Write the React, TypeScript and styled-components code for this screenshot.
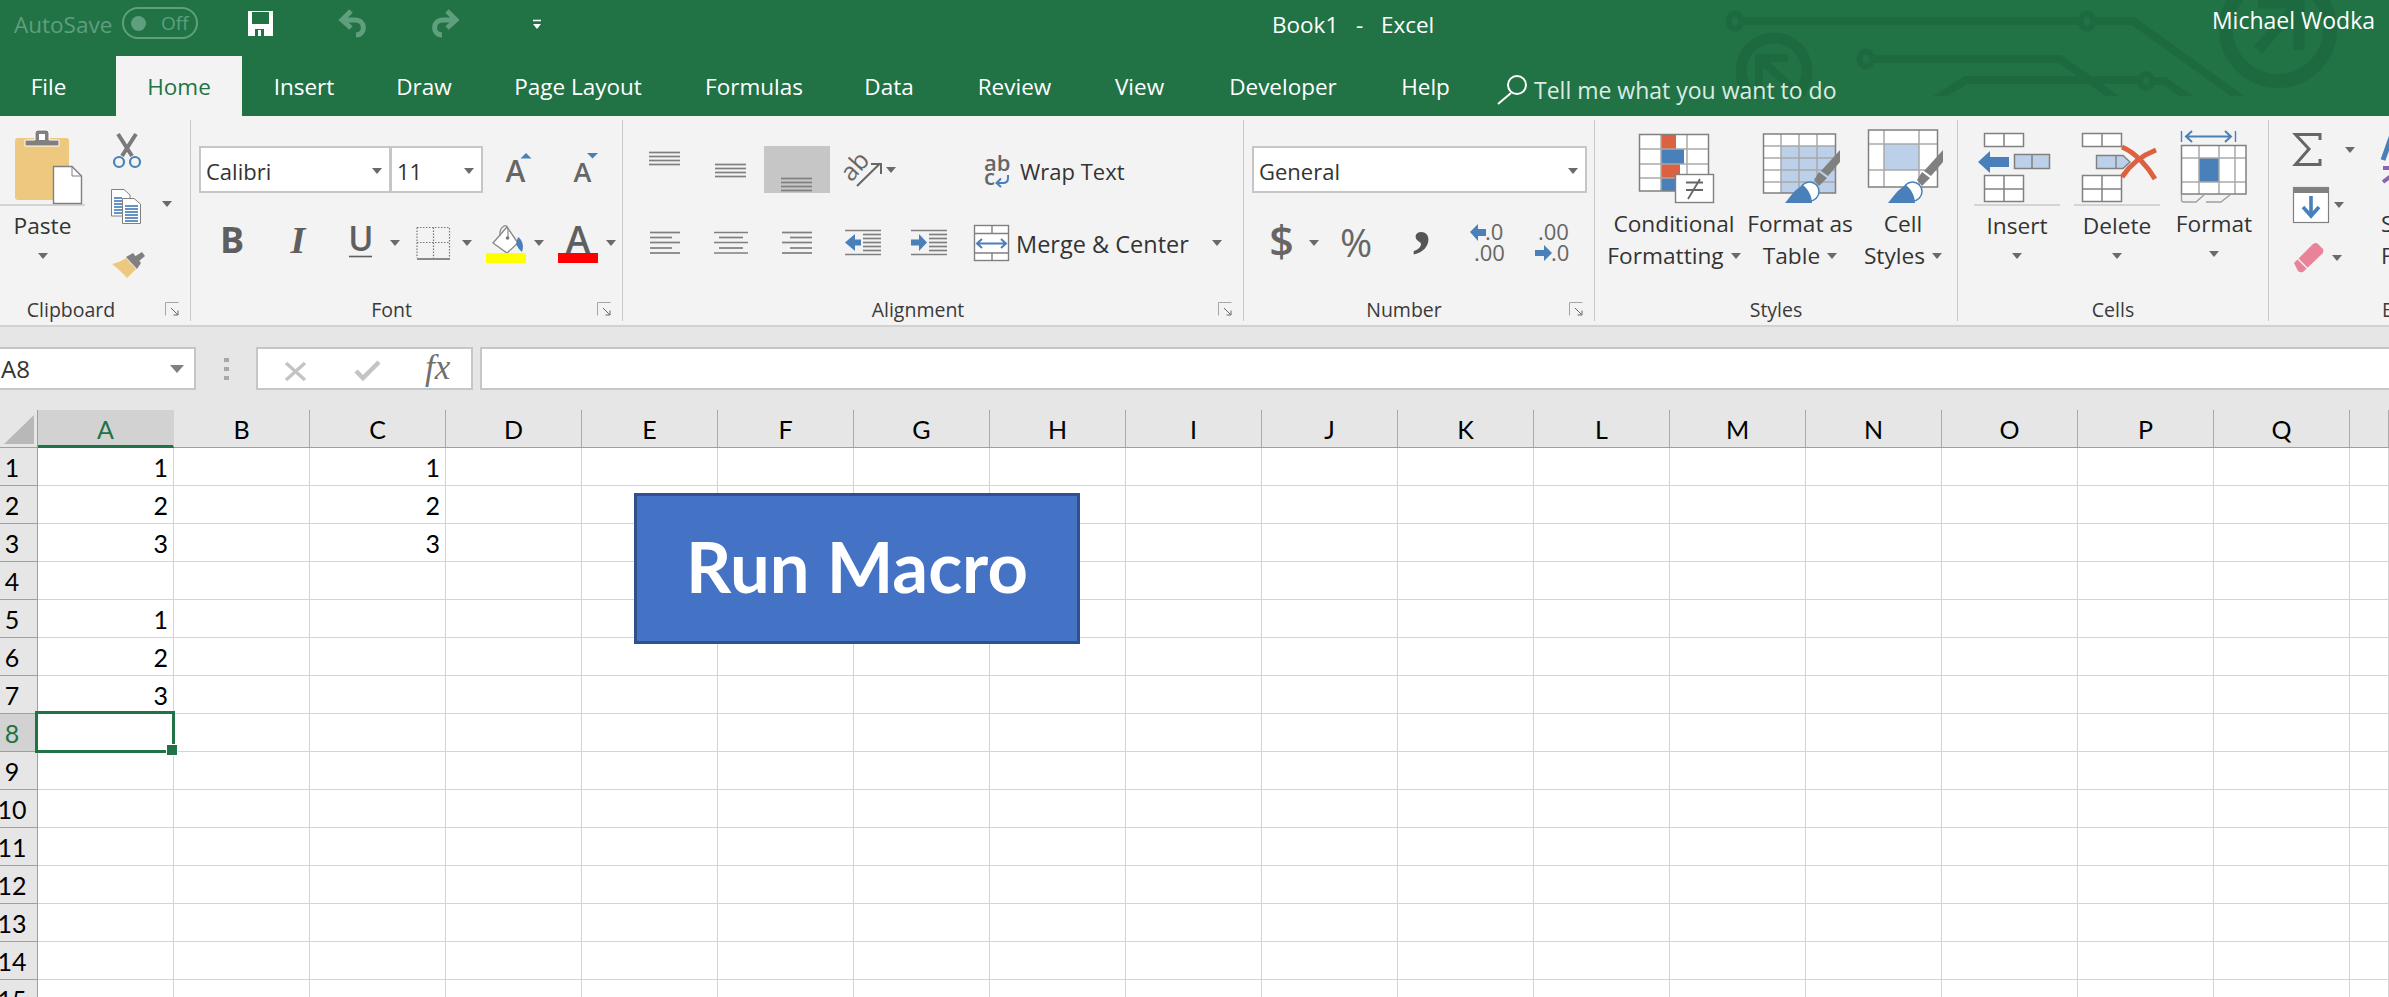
import React from 'react'
import styled, { createGlobalStyle } from 'styled-components'

const GREEN = '#217346'
const UI_FONT = '"Open Sans", "Noto Sans", sans-serif'
const CELL_FONT = 'Lato, "Liberation Sans", sans-serif'
const BLUE = '#4a80b9'
const GRAY = '#808080'
const FADED = '#5f9f7e'

const GlobalStyle = createGlobalStyle`
  html, body { margin: 0; padding: 0; background: #fff; overflow: hidden; }
  * { box-sizing: border-box; }
`

const Page = styled.div`
  width: 2389px;
  height: 997px;
  overflow: hidden;
  font-family: ${UI_FONT};
  color: #2b2b2b;
  display: flex;
  flex-direction: column;
`

const Header = styled.header`
  position: relative;
  height: 116px;
  flex: none;
  background: ${GREEN};
  color: #fff;
`

const Circuit = styled.svg`
  position: absolute;
  left: 0;
  top: 0;
`

const TitleBar = styled.div`
  position: relative;
  height: 56px;
  display: flex;
  align-items: center;
`

const AutoSave = styled.span`
  margin-left: 14px;
  width: 108px;
  font-size: 22.5px;
  color: ${FADED};
  white-space: nowrap;
  position: relative;
  top: -4px;
`

const Toggle = styled.div`
  width: 76px;
  height: 32px;
  margin-top: -10px;
  border: 2px solid ${FADED};
  border-radius: 16px;
  display: flex;
  align-items: center;
  padding-left: 7px;
  color: ${FADED};
  font-size: 19px;
  &::before {
    content: '';
    width: 15px;
    height: 15px;
    border-radius: 50%;
    background: ${FADED};
    margin-right: 15px;
  }
`

const BookTitle = styled.span`
  margin-left: 729px;
  width: 160px;
  font-size: 22.5px;
  word-spacing: 3px;
  white-space: pre;
  margin-top: -8px;
`

const UserName = styled.span`
  margin-left: auto;
  padding-right: 14px;
  font-size: 23px;
  margin-top: -16px;
`

const TabRow = styled.nav`
  position: relative;
  height: 60px;
  display: flex;
`

const Tab = styled.div<{ $w: number; $active?: boolean; $pr?: number }>`
  width: ${p => p.$w}px;
  display: flex;
  align-items: center;
  justify-content: center;
  font-size: 22.5px;
  white-space: nowrap;
  padding-top: 1px;
  padding-right: ${p => p.$pr ?? 0}px;
  background: ${p => (p.$active ? '#f3f3f3' : 'transparent')};
  color: ${p => (p.$active ? GREEN : '#fff')};
`

const TellMe = styled.div`
  display: flex;
  align-items: center;
  margin-left: 17px;
  font-size: 23px;
  color: #dcebe3;
  padding-top: 8px;
  white-space: nowrap;
  gap: 6px;
`

const Ribbon = styled.section`
  height: 211px;
  flex: none;
  display: flex;
  padding-top: 4px;
  background: #f3f3f3;
  border-bottom: 2px solid #d2d2d2;
`

const Group = styled.div<{ $w: number; $last?: boolean }>`
  width: ${p => p.$w}px;
  flex: none;
  height: 201px;
  display: flex;
  flex-direction: column;
  border-right: ${p => (p.$last ? 'none' : '1px solid #c8c8c8')};
`

const GroupBody = styled.div`
  height: 177px;
  display: flex;
  flex: none;
`

const RowStack = styled.div`
  display: flex;
  flex-direction: column;
  padding-top: 26px;
`

const ToolRow = styled.div<{ $second?: boolean }>`
  height: ${p => (p.$second ? 46 : 47)}px;
  margin-top: ${p => (p.$second ? 27 : 0)}px;
  display: flex;
  align-items: center;
  flex: none;
`

const GroupFooter = styled.div`
  height: 24px;
  display: flex;
  align-items: center;
`

const GroupLabel = styled.span<{ $pr?: number; $pl?: number; $left?: boolean }>`
  flex: 1;
  text-align: ${p => (p.$left ? 'left' : 'center')};
  padding-right: ${p => p.$pr ?? 0}px;
  padding-left: ${p => p.$pl ?? 0}px;
  font-size: 19.5px;
  color: #3a3a3a;
  white-space: nowrap;
`

const LauncherSlot = styled.span`
  width: 30px;
  flex: none;
  display: flex;
  justify-content: flex-end;
  padding-right: 11px;
`

const Caret = styled.span<{ $ml?: number; $mt?: number }>`
  flex: none;
  display: block;
  width: 0;
  height: 0;
  margin-left: ${p => p.$ml ?? 0}px;
  margin-top: ${p => p.$mt ?? 0}px;
  border-left: 5px solid transparent;
  border-right: 5px solid transparent;
  border-top: 6px solid #6a6a6a;
`

const SelectBox = styled.div<{ $w: number; $ml?: number }>`
  width: ${p => p.$w}px;
  height: 47px;
  margin-left: ${p => p.$ml ?? 0}px;
  flex: none;
  background: #fff;
  border: 2px solid #c6c6c6;
  display: flex;
  align-items: center;
  justify-content: space-between;
  padding: 2px 7px 0 5px;
  font-size: 22px;
  color: #333;
`

const ActiveTool = styled.div<{ $ml: number }>`
  width: 66px;
  height: 47px;
  margin-left: ${p => p.$ml}px;
  flex: none;
  background: #c6c6c6;
  display: flex;
  align-items: flex-end;
  justify-content: center;
`

const ToolText = styled.span<{ $ml: number; $w: number; $size?: number }>`
  width: ${p => p.$w}px;
  margin-left: ${p => p.$ml}px;
  flex: none;
  font-size: ${p => p.$size ?? 22}px;
  white-space: nowrap;
  color: #333;
  padding-top: 2px;
`

const BigButton = styled.div<{ $w: number; $ml?: number }>`
  width: ${p => p.$w}px;
  margin-left: ${p => p.$ml ?? 0}px;
  flex: none;
  display: flex;
  flex-direction: column;
  align-items: center;
`

const BigIcon = styled.div<{ $split?: boolean }>`
  width: 100%;
  height: 86px;
  flex: none;
  display: flex;
  align-items: flex-end;
  justify-content: center;
  border-bottom: ${p => (p.$split ? '2px solid #d4d4d4' : '2px solid transparent')};
`

const BigText = styled.span<{ $split?: boolean }>`
  margin-top: ${p => (p.$split ? 2 : 0)}px;
  height: 32px;
  padding-top: 3px;
  font-size: 22.7px;
  color: #333;
  white-space: nowrap;
  display: flex;
  align-items: center;
  gap: 7px;
`

const BigCaretRow = styled.div`
  height: 32px;
  display: flex;
  align-items: center;
`

const SmallStack = styled.div<{ $ml: number }>`
  margin-left: ${p => p.$ml}px;
  padding-top: 12px;
  display: flex;
  flex-direction: column;
  gap: 18px;
`

const SmallRow = styled.div`
  display: flex;
  align-items: center;
`

const SortCol = styled.div<{ $ml: number }>`
  margin-left: ${p => p.$ml}px;
  display: flex;
  flex-direction: column;
  align-items: flex-start;
`

const FormulaBar = styled.div`
  height: 83px;
  flex: none;
  background: #e6e6e6;
  display: flex;
  align-items: flex-start;
  padding-top: 20px;
`

const NameBox = styled.div`
  width: 196px;
  height: 43px;
  flex: none;
  background: #fff;
  border: 2px solid #c6c6c6;
  border-left: none;
  display: flex;
  align-items: center;
  justify-content: space-between;
  padding: 0 10px 0 1px;
  font-size: 24px;
  color: #333;
`

const NameCaret = styled.span`
  width: 0;
  height: 0;
  border-left: 7px solid transparent;
  border-right: 7px solid transparent;
  border-top: 8px solid #808080;
`

const Grip = styled.div`
  width: 60px;
  height: 43px;
  flex: none;
  display: flex;
  flex-direction: column;
  align-items: center;
  justify-content: center;
  gap: 5px;
  span {
    width: 5px;
    height: 4px;
    background: #a8a8a8;
  }
`

const FxBox = styled.div`
  width: 217px;
  height: 43px;
  flex: none;
  background: #fff;
  border: 2px solid #c6c6c6;
`

const FormulaInput = styled.div`
  flex: 1;
  height: 43px;
  margin-left: 7px;
  background: #fff;
  border: 2px solid #c6c6c6;
  border-right: none;
`

const Sheet = styled.main`
  position: relative;
  flex: 1;
  overflow: hidden;
  background: #fff;
  font-family: ${CELL_FONT};
  color: #000;
`

const SheetRow = styled.div`
  display: grid;
  grid-template-columns: 38px repeat(17, 136px) 1fr;
  height: 38px;
`

const Corner = styled.div`
  background: #e6e6e6;
  border-right: 1px solid #9f9f9f;
  border-bottom: 1px solid #9f9f9f;
  display: flex;
  align-items: flex-end;
  justify-content: flex-end;
  padding: 0 3px 3px 0;
  &::before {
    content: '';
    width: 30px;
    height: 29px;
    background: #b8b8b8;
    clip-path: polygon(100% 0, 100% 100%, 0 100%);
  }
`

const ColHead = styled.div<{ $active?: boolean }>`
  background: ${p => (p.$active ? '#d2d2d2' : '#e6e6e6')};
  color: ${p => (p.$active ? GREEN : '#000')};
  border-right: 1px solid ${p => (p.$active ? '#d2d2d2' : '#ababab')};
  border-bottom: ${p => (p.$active ? `3px solid ${GREEN}` : '1px solid #9f9f9f')};
  display: flex;
  align-items: center;
  justify-content: center;
  font-size: 25px;
  padding-top: ${p => (p.$active ? 2 : 0)}px;
`

const RowHead = styled.div<{ $active?: boolean }>`
  background: ${p => (p.$active ? '#d2d2d2' : '#e6e6e6')};
  color: ${p => (p.$active ? GREEN : '#000')};
  border-right: 1px solid #9f9f9f;
  border-bottom: 1px solid #9f9f9f;
  display: flex;
  align-items: center;
  justify-content: center;
  padding-right: 13px;
  font-size: 25px;
`

const Cell = styled.div<{ $selected?: boolean }>`
  position: relative;
  border-right: 1px solid #d4d4d4;
  border-bottom: 1px solid #d4d4d4;
  display: flex;
  align-items: center;
  justify-content: flex-end;
  padding-right: 5px;
  font-size: 25px;
  ${p =>
    p.$selected &&
    `
    &::before {
      content: '';
      position: absolute;
      left: -3px;
      top: -3px;
      right: -2px;
      bottom: -2px;
      border: 3px solid ${GREEN};
      z-index: 2;
    }
    &::after {
      content: '';
      position: absolute;
      right: -4px;
      bottom: -4px;
      width: 10px;
      height: 10px;
      background: ${GREEN};
      outline: 1px solid #fff;
      z-index: 3;
    }
  `}
`

const MacroButton = styled.div`
  position: absolute;
  left: 634px;
  top: 83px;
  width: 446px;
  height: 151px;
  background: #4472c4;
  border: 3px solid #2f528f;
  display: flex;
  align-items: center;
  justify-content: center;
  color: #fff;
  font-size: 70.5px;
  font-weight: 700;
  padding-bottom: 7px;
  z-index: 4;
`

const IconSvg = styled.svg<{ $ml?: number; $mt?: number }>`
  flex: none;
  display: block;
  overflow: visible;
  margin-left: ${p => p.$ml ?? 0}px;
  margin-top: ${p => p.$mt ?? 0}px;
  text {
    font-family: ${UI_FONT};
  }
`

type PicProps = {
  x: number
  y: number
  w: number
  h: number
  ml?: number
  mt?: number
  children: React.ReactNode
}

// viewBox is kept in page coordinates, so numbers can be read straight off the screenshot
const Pic = ({ x, y, w, h, ml, mt, children }: PicProps) => (
  <IconSvg $ml={ml} $mt={mt} width={w} height={h} viewBox={`${x} ${y} ${w} ${h}`}>
    {children}
  </IconSvg>
)

const Launcher = () => (
  <svg width="14" height="14" viewBox="0 0 14 14">
    <path d="M.5 13.5V.5H13.5" fill="none" stroke="#a6a6a6" />
    <path d="M6 6l6.5 6.5M13 8.5V13H8.5" fill="none" stroke="#666" />
  </svg>
)

const HLines = ({ rows, color = '#7f7f7f' }: { rows: number[][]; color?: string }) => (
  <g stroke={color} strokeWidth="1.7">
    {rows.map(([a, b, y]) => (
      <line key={`${a}-${b}-${y}`} x1={a} x2={b} y1={y} y2={y} />
    ))}
  </g>
)

const bars = (a: number, b: number, ys: number[]) => ys.map(y => [a, b, y])

const GridLines = ({
  xs,
  ys,
  color = '#a8a8a8',
  edge = GRAY,
}: {
  xs: number[]
  ys: number[]
  color?: string
  edge?: string
}) => {
  const left = xs[0]
  const right = xs[xs.length - 1]
  const top = ys[0]
  const bottom = ys[ys.length - 1]
  return (
    <g fill="none" strokeWidth="1.5">
      <g stroke={color}>
        {xs.slice(1, -1).map(x => (
          <line key={`v${x}`} x1={x} x2={x} y1={top} y2={bottom} />
        ))}
        {ys.slice(1, -1).map(y => (
          <line key={`h${y}`} y1={y} y2={y} x1={left} x2={right} />
        ))}
      </g>
      <rect x={left} y={top} width={right - left} height={bottom - top} stroke={edge} />
    </g>
  )
}

const tabs = [
  { name: 'File', w: 116, pr: 19 },
  { name: 'Home', w: 126, active: true },
  { name: 'Insert', w: 124 },
  { name: 'Draw', w: 116 },
  { name: 'Page Layout', w: 192 },
  { name: 'Formulas', w: 160 },
  { name: 'Data', w: 110 },
  { name: 'Review', w: 141 },
  { name: 'View', w: 109 },
  { name: 'Developer', w: 178 },
  { name: 'Help', w: 107 },
]

const columns = 'ABCDEFGHIJKLMNOPQ'.split('')

const values: Record<string, string> = {
  A1: '1',
  A2: '2',
  A3: '3',
  A5: '1',
  A6: '2',
  A7: '3',
  C1: '1',
  C2: '2',
  C3: '3',
}

const CircuitArt = () => (
  <Circuit width="2389" height="96" viewBox="0 0 2389 96" fill="none" stroke="#1e6a40" strokeWidth="8">
    <path d="M1742 21H2080M2094 21H2133L2243 100" />
    <ellipse cx="1735" cy="21" rx="6.500" ry="7.500" strokeWidth="6" />
    <ellipse cx="2087" cy="21" rx="6.500" ry="7.500" strokeWidth="6" />
    <path d="M1873 59H2060L2118 100" />
    <ellipse cx="1866" cy="59" rx="6.500" ry="7.500" strokeWidth="6" />
    <path d="M1934 100L1966 80H2140M2152 81H2164L2192 100" />
    <ellipse cx="2146" cy="81" rx="6" ry="7" strokeWidth="6" />
    <circle cx="1774" cy="71" r="33" strokeWidth="11" />
    <path d="M1788 58H1759V96M1759 58L1805 100" strokeWidth="8" />
    <circle cx="2278" cy="29" r="52" strokeWidth="14" />
    <path d="M2258 50L2296 6M2299 50V-2M2258 3H2299" strokeWidth="11" />
  </Circuit>
)

// paint brush shared by the two table style icons, x is the right end of the handle
const Brush = ({ x }: { x: number }) => (
  <g>
    <path d={`M${x} 151V163L${x - 12} 177L${x - 19} 172Z`} fill={GRAY} />
    <path d={`M${x - 21} 173L${x - 13} 179L${x - 21} 187L${x - 26} 181Z`} fill={GRAY} />
    <circle cx={x - 30.5} cy={192.5} r={9.5} fill="#fff" stroke={BLUE} strokeWidth="1.5" />
    <path d={`M${x - 55} 204C${x - 50} 198 ${x - 45} 190 ${x - 37} 186C${x - 32} 190 ${x - 28} 197 ${x - 28} 204Z`} fill={BLUE} />
  </g>
)

const App = () => (
  <Page>
    <GlobalStyle />
    <Header>
      <CircuitArt />
      <TitleBar>
        <AutoSave>AutoSave</AutoSave>
        <Toggle>Off</Toggle>
        <Pic x={248} y={8} w={26} h={30} ml={50} mt={-8}>
          <path d="M248 10H273V35H248Z" fill="#fff" />
          <rect x="252" y="11" width="17" height="12" fill={GREEN} />
          <rect x="255" y="28" width="9" height="7" fill={GREEN} />
          <rect x="258" y="29" width="3" height="6" fill="#fff" />
        </Pic>
        <Pic x={338} y={8} w={30} h={30} ml={64} mt={-8}>
          <path
            d="M351 10L342 19L351 27M343 19H355C366 19 366 34 356 34"
            fill="none"
            stroke={FADED}
            strokeWidth="5"
          />
        </Pic>
        <Pic x={431} y={8} w={30} h={30} ml={63} mt={-8}>
          <path
            d="M447 10L456 19L447 27M455 19H443C432 19 432 34 442 34"
            fill="none"
            stroke={FADED}
            strokeWidth="5"
          />
        </Pic>
        <Pic x={531} y={14} w={12} h={14} ml={70} mt={-8}>
          <path d="M533 17.5H541" stroke="#fff" strokeWidth="1.5" />
          <path d="M533 21H541L537 26Z" fill="#fff" />
        </Pic>
        <BookTitle>Book1&nbsp; - &nbsp;Excel</BookTitle>
        <UserName>Michael Wodka</UserName>
      </TitleBar>
      <TabRow>
        {tabs.map(t => (
          <Tab key={t.name} $w={t.w} $active={t.active} $pr={t.pr}>
            {t.name}
          </Tab>
        ))}
        <TellMe>
          <Pic x={1496} y={70} w={32} h={32}>
            <circle cx="1517" cy="81" r="9" fill="none" stroke="#fff" strokeWidth="2" />
            <path d="M1511 89L1498 100" stroke="#fff" strokeWidth="2" />
          </Pic>
          Tell me what you want to do
        </TellMe>
      </TabRow>
    </Header>

    <Ribbon>
      <Group $w={191}>
        <GroupBody>
          <BigButton $w={85}>
            <BigIcon $split>
              <Pic x={0} y={128} w={85} h={76}>
                <rect x="15" y="138" width="54" height="62" rx="3" fill="#edc87e" />
                <path d="M25 146V140H35V133Q35 130 38 130H46Q49 130 49 133V140H59V146Z" fill={GRAY} stroke="#fff" />
                <rect x="39" y="134" width="6" height="6" fill="#fff" />
                <path d="M53.5 166.5H72L81.5 176V203.5H53.5Z" fill="#fff" stroke={GRAY} strokeWidth="1.4" />
                <path d="M72 166.5V176H81.5" fill="none" stroke={GRAY} />
              </Pic>
            </BigIcon>
            <BigText $split>Paste</BigText>
            <BigCaretRow>
              <Caret />
            </BigCaretRow>
          </BigButton>
          <SmallStack $ml={25}>
            <SmallRow>
              <Pic x={108} y={132} w={34} h={38}>
                <path d="M116 134L130 156M134 134L120 156" stroke="#7a7a7a" strokeWidth="4" />
                <circle cx="117" cy="162" r="5" fill="none" stroke={BLUE} strokeWidth="2.2" />
                <circle cx="133" cy="162" r="5" fill="none" stroke={BLUE} strokeWidth="2.2" />
              </Pic>
            </SmallRow>
            <SmallRow>
              <Pic x={106} y={187} w={32} h={38}>
                <path d="M107.5 188.5H120L126 194V215H107.5Z" fill="#fff" stroke={GRAY} />
                <HLines color={BLUE} rows={bars(110, 118, [197, 200, 203, 206, 209, 212])} />
                <path d="M118.5 197.5H130L136.5 203V222.5H118.5Z" fill="#fff" stroke={GRAY} />
                <HLines color={BLUE} rows={bars(121, 134, [205, 208, 211, 214, 217, 220])} />
              </Pic>
              <Caret $ml={20} $mt={-6} />
            </SmallRow>
            <SmallRow>
              <Pic x={106} y={247} w={38} h={32} mt={6}>
                <path d="M108 261C113 260 118 258 122 255L132 266C129 269 125 273 123 275C119 270 113 265 108 261Z" fill="#edc87e" />
                <path d="M122 254L129 250L137 260L133 266Z" fill={GRAY} />
                <path d="M130 254L138 249L141 253L134 259Z" fill={GRAY} />
              </Pic>
            </SmallRow>
          </SmallStack>
        </GroupBody>
        <GroupFooter>
          <GroupLabel $pr={18}>Clipboard</GroupLabel>
          <LauncherSlot>
            <Launcher />
          </LauncherSlot>
        </GroupFooter>
      </Group>

      <Group $w={432}>
        <GroupBody>
          <RowStack>
            <ToolRow>
              <SelectBox $w={192} $ml={8}>
                Calibri
                <Caret />
              </SelectBox>
              <SelectBox $w={93} $ml={-1}>
                11
                <Caret />
              </SelectBox>
              <Pic x={503} y={146} w={30} h={47} ml={21}>
                <path d="M525 153L530.500 158.500H519.500Z" fill={BLUE} />
                <text x="514.500" y="182" fontSize="30" fontWeight="600" textAnchor="middle" fill="#666">A</text>
              </Pic>
              <Pic x={570} y={146} w={30} h={47} ml={37}>
                <path d="M591.500 158.500L586 153H597Z" fill={BLUE} />
                <text x="581.500" y="182" fontSize="27" fontWeight="600" textAnchor="middle" fill="#666">A</text>
              </Pic>
            </ToolRow>
            <ToolRow $second>
              <Pic x={218} y={220} w={26} h={46} ml={28}>
                <text x="231" y="253" fontSize="36" fontWeight="700" textAnchor="middle" fill="#5f5f5f">B</text>
              </Pic>
              <Pic x={286} y={220} w={24} h={46} ml={42}>
                <text x="297" y="253" fontSize="38" fontWeight="700" fontStyle="italic" textAnchor="middle" fill="#5f5f5f" style={{ fontFamily: '"Liberation Serif", serif' }}>I</text>
              </Pic>
              <Pic x={346} y={220} w={28} h={46} ml={36}>
                <text x="360" y="251" fontSize="34" textAnchor="middle" fontWeight="600" fill="#5f5f5f">U</text>
                <path d="M348 256.500H371" stroke="#5f5f5f" strokeWidth="1.6" />
              </Pic>
              <Caret $ml={15} />
              <Pic x={414} y={225} w={35} h={35} ml={16}>
                <path d="M415 226.500H447.500V257M415 226.500V257M431.500 226.500V257M415 241.500H447.500" fill="none" stroke="#777" strokeWidth="1.2" strokeDasharray="1.500 1.500" />
                <path d="M415 258H448" stroke="#666" strokeWidth="1.6" />
              </Pic>
              <Caret $ml={11} />
              <Pic x={483} y={222} w={40} h={42} ml={14}>
                <path d="M490 243L504 227L515 243L504 253Z" fill="#fff" stroke="#8a8a8a" strokeWidth="1.4" />
                <path d="M497 236C496 226 505 222 505 230V238" fill="none" stroke="#8a8a8a" strokeWidth="1.2" />
                <circle cx="504.500" cy="238" r="1.800" fill="#777" />
                <path d="M515 237C520 240 521 247 519 252C516 250 515 247 513 244Z" fill={BLUE} />
                <rect x="483" y="253" width="40" height="10" fill="#ffff00" />
              </Pic>
              <Caret $ml={8} />
              <Pic x={554} y={222} w={40} h={42} ml={14}>
                <text x="574" y="253" fontSize="37" fontWeight="600" textAnchor="middle" fill="#5f5f5f">A</text>
                <rect x="554" y="253" width="40" height="10" fill="#ff0000" />
              </Pic>
              <Caret $ml={8} />
            </ToolRow>
          </RowStack>
        </GroupBody>
        <GroupFooter>
          <GroupLabel>Font</GroupLabel>
          <LauncherSlot>
            <Launcher />
          </LauncherSlot>
        </GroupFooter>
      </Group>

      <Group $w={621}>
        <GroupBody>
          <RowStack>
            <ToolRow>
              <Pic x={649} y={146} w={31} h={47} ml={26}>
                <HLines rows={bars(649, 680, [152.5, 156.5, 160.5, 164.5])} />
              </Pic>
              <Pic x={715} y={146} w={31} h={47} ml={35}>
                <HLines rows={bars(715, 746, [164.5, 168.5, 172.5, 176.5])} />
              </Pic>
              <ActiveTool $ml={18}>
                <Pic x={781} y={172} w={32} h={18}>
                  <HLines rows={bars(781, 812, [175.5, 179.5, 183.5, 187.5])} />
                </Pic>
              </ActiveTool>
              <Pic x={844} y={150} w={38} h={40} ml={14}>
                <text x="0" y="0" fontSize="25" fill="#666" textAnchor="middle" transform="translate(861 172) rotate(-48)">ab</text>
                <path d="M857 186L880 163.500M871 164H881V174" fill="none" stroke="#666" strokeWidth="2" />
              </Pic>
              <Caret $ml={4} />
              <Pic x={980} y={150} w={30} h={40} ml={85}>
                <text x="983" y="171" fontSize="22" fontWeight="600" fill="#666">ab</text>
                <text x="983" y="185" fontSize="22" fontWeight="600" fill="#666">c</text>
                <path d="M1007 175V178Q1007 183 1002 183H996M1000 178.500L995.500 183L1000 187" fill="none" stroke={BLUE} strokeWidth="2" />
              </Pic>
              <ToolText $ml={9} $w={120}>Wrap Text</ToolText>
            </ToolRow>
            <ToolRow $second>
              <Pic x={650} y={220} w={30} h={46} ml={27}>
                <HLines rows={[[650, 680, 232.5], [650, 672, 237.5], [650, 680, 242.5], [650, 672, 248], [650, 680, 253]]} />
              </Pic>
              <Pic x={714} y={220} w={34} h={46} ml={34}>
                <HLines rows={[[714, 748, 232.5], [719, 743, 237.5], [714, 748, 242.5], [719, 743, 248], [714, 748, 253]]} />
              </Pic>
              <Pic x={782} y={220} w={30} h={46} ml={34}>
                <HLines rows={[[782, 812, 232.5], [790, 812, 237.5], [782, 812, 242.5], [790, 812, 248], [782, 812, 253]]} />
              </Pic>
              <Pic x={845} y={220} w={36} h={46} ml={33}>
                <HLines rows={[[845, 881, 230.5], [863, 881, 234.5], [863, 881, 238.5], [863, 881, 242.500], [863, 881, 246.5], [863, 881, 250.5], [845, 881, 254.5]]} />
                <path d="M845 242.500L855 234V239.500H861V245.500H855V251Z" fill={BLUE} />
              </Pic>
              <Pic x={911} y={220} w={36} h={46} ml={30}>
                <HLines rows={[[911, 947, 230.5], [929, 947, 234.5], [929, 947, 238.5], [929, 947, 242.500], [929, 947, 246.5], [929, 947, 250.5], [911, 947, 254.5]]} />
                <path d="M927 242.500L919 234V239.500H911V245.500H919V251Z" fill={BLUE} />
              </Pic>
              <Pic x={973} y={224} w={37} h={38} ml={26}>
                <rect x="974.500" y="225.500" width="34" height="35" fill="#fff" stroke={GRAY} strokeWidth="1.4" />
                <path d="M974 233.500H1009M974 253H1009M992 225V233M992 253V261" stroke={GRAY} strokeWidth="1.4" />
                <path d="M977 243.500H1006M982 239L977 243.500L982 248M1001 239L1006 243.500L1001 248" fill="none" stroke={BLUE} strokeWidth="2" />
              </Pic>
              <ToolText $ml={6} $w={176} $size={23.5}>Merge &amp; Center</ToolText>
              <Caret $ml={20} />
            </ToolRow>
          </RowStack>
        </GroupBody>
        <GroupFooter>
          <GroupLabel>Alignment</GroupLabel>
          <LauncherSlot>
            <Launcher />
          </LauncherSlot>
        </GroupFooter>
      </Group>

      <Group $w={351}>
        <GroupBody>
          <RowStack>
            <ToolRow>
              <SelectBox $w={335} $ml={8}>
                General
                <Caret />
              </SelectBox>
            </ToolRow>
            <ToolRow $second>
              <Pic x={1266} y={220} w={32} h={46} ml={22}>
                <text x="1281.500" y="257" fontSize="43" fontWeight="600" textAnchor="middle" fill="#666">$</text>
              </Pic>
              <Caret $ml={11} />
              <Pic x={1336} y={220} w={40} h={46} ml={17}>
                <text x="1356" y="257" fontSize="39" textAnchor="middle" fill="#666">%</text>
              </Pic>
              <Pic x={1408} y={220} w={28} h={46} ml={32}>
                <text x="1422" y="243" fontSize="74" fontWeight="700" textAnchor="middle" fill="#555" style={{ fontFamily: '"Liberation Serif", serif' }}>,</text>
              </Pic>
              <Pic x={1468} y={220} w={40} h={46} ml={32}>
                <path d="M1470 232L1478 224V229H1486V236H1478V241Z" fill={BLUE} />
                <text x="1485" y="240" fontSize="22" fill="#666">.0</text>
                <text x="1474" y="261" fontSize="22" fill="#666">.00</text>
              </Pic>
              <Pic x={1534} y={220} w={40} h={46} ml={26}>
                <text x="1538" y="240" fontSize="22" fill="#666">.00</text>
                <path d="M1552 253L1544 245V250H1535V256H1544V261Z" fill={BLUE} />
                <text x="1551" y="261" fontSize="22" fill="#666">.0</text>
              </Pic>
            </ToolRow>
          </RowStack>
        </GroupBody>
        <GroupFooter>
          <GroupLabel>Number</GroupLabel>
          <LauncherSlot>
            <Launcher />
          </LauncherSlot>
        </GroupFooter>
      </Group>

      <Group $w={363}>
        <GroupBody>
          <BigButton $w={140} $ml={9}>
            <BigIcon>
              <Pic x={1638} y={134} w={78} h={71} ml={6}>
                <rect x="1639" y="135" width="70" height="57" fill="#fff" />
                <rect x="1661" y="135" width="15" height="15" fill="#dc6141" />
                <rect x="1661" y="150" width="23" height="15" fill={BLUE} />
                <rect x="1661" y="165" width="19" height="14" fill="#dc6141" />
                <rect x="1661" y="179" width="14" height="13" fill={BLUE} />
                <GridLines xs={[1639.5, 1661, 1687, 1708.5]} ys={[135.5, 150, 165, 179, 192]} />
                <rect x="1675.500" y="175.500" width="38" height="28" fill="#fff" stroke={GRAY} strokeWidth="1.4" />
                <path d="M1686 183.500H1703M1686 191H1703M1700 180L1688 200" fill="none" stroke="#666" strokeWidth="1.800" />
              </Pic>
            </BigIcon>
            <BigText>Conditional</BigText>
            <BigText>
              Formatting
              <Caret />
            </BigText>
          </BigButton>
          <BigButton $w={112}>
            <BigIcon>
              <Pic x={1762} y={133} w={82} h={72} ml={6}>
                <rect x="1763" y="135" width="73" height="59" fill="#fff" />
                <rect x="1781" y="147" width="55" height="47" fill="#bdd0e9" />
                <GridLines xs={[1763.5, 1781, 1799, 1817, 1835.5]} ys={[135, 147, 159, 171, 183, 194]} />
                <Brush x={1840} />
              </Pic>
            </BigIcon>
            <BigText>Format as</BigText>
            <BigText>
              Table
              <Caret />
            </BigText>
          </BigButton>
          <BigButton $w={94}>
            <BigIcon>
              <Pic x={1867} y={129} w={78} h={76} ml={6}>
                <rect x="1868" y="131" width="70" height="57" fill="#fff" />
                <rect x="1884" y="145" width="35" height="26" fill="#bdd0e9" />
                <GridLines xs={[1868.5, 1884, 1919, 1937.5]} ys={[131, 145, 171, 188]} />
                <Brush x={1943} />
              </Pic>
            </BigIcon>
            <BigText>Cell</BigText>
            <BigText>
              Styles
              <Caret />
            </BigText>
          </BigButton>
        </GroupBody>
        <GroupFooter>
          <GroupLabel>Styles</GroupLabel>
        </GroupFooter>
      </Group>

      <Group $w={311}>
        <GroupBody>
          <BigButton $w={86} $ml={16}>
            <BigIcon $split>
              <Pic x={1977} y={129} w={74} h={72} ml={-6}>
                <rect x="1984" y="130" width="40" height="14" fill="#fff" />
                <GridLines xs={[1984.5, 2004, 2023.5]} ys={[130.5, 143.5]} color={GRAY} />
                <rect x="2014" y="151" width="36" height="15" fill="#bdd0e9" />
                <GridLines xs={[2014.5, 2032, 2049.5]} ys={[151.5, 165.5]} color={GRAY} />
                <path d="M1978 159L1990 148V154H2009V164H1990V170Z" fill={BLUE} />
                <rect x="1984" y="172" width="40" height="27" fill="#fff" />
                <GridLines xs={[1984.5, 2004, 2023.5]} ys={[172.5, 186, 198.5]} color={GRAY} />
              </Pic>
            </BigIcon>
            <BigText $split>Insert</BigText>
            <BigCaretRow>
              <Caret />
            </BigCaretRow>
          </BigButton>
          <BigButton $w={86} $ml={14}>
            <BigIcon $split>
              <Pic x={2081} y={129} w={78} h={72} ml={6}>
                <rect x="2082" y="130" width="40" height="14" fill="#fff" />
                <GridLines xs={[2082.5, 2102, 2121.5]} ys={[130.5, 143.5]} color={GRAY} />
                <path d="M2096.500 152.500H2123L2130 159L2123 165.500H2096.500Z" fill="#bdd0e9" stroke={GRAY} strokeWidth="1.4" />
                <path d="M2116 152V166" stroke={GRAY} strokeWidth="1.4" />
                <rect x="2082" y="172" width="40" height="27" fill="#fff" />
                <GridLines xs={[2082.5, 2102, 2121.5]} ys={[172.5, 186, 198.5]} color={GRAY} />
                <path d="M2156 147C2143 152 2130 162 2122 174" fill="none" stroke="#dc6141" strokeWidth="5" />
                <path d="M2122 144C2136 150 2148 164 2155 176" fill="none" stroke="#dc6141" strokeWidth="5" />
              </Pic>
            </BigIcon>
            <BigText $split>Delete</BigText>
            <BigCaretRow>
              <Caret />
            </BigCaretRow>
          </BigButton>
          <BigButton $w={88} $ml={10}>
            <BigIcon>
              <Pic x={2180} y={127} w={68} h={74}>
                <path d="M2181.500 128V139M2235.500 128V139" stroke={BLUE} strokeWidth="1.4" />
                <path d="M2186 133.500H2231M2192 128L2186 133.500L2192 139M2225 128L2231 133.500L2225 139" fill="none" stroke={BLUE} strokeWidth="2" />
                <rect x="2181" y="142" width="65" height="49" fill="#fff" />
                <rect x="2199" y="155" width="20" height="24" fill={BLUE} />
                <GridLines xs={[2181.5, 2199, 2219, 2235, 2246]} ys={[142.5, 155, 179, 191]} />
                <path d="M2181.500 191V197Q2181.500 199 2184 199H2196L2205 191M2206 199H2221L2231 191" fill="none" stroke="#a0a0a0" strokeWidth="1.4" />
              </Pic>
            </BigIcon>
            <BigText>Format</BigText>
            <BigCaretRow>
              <Caret />
            </BigCaretRow>
          </BigButton>
        </GroupBody>
        <GroupFooter>
          <GroupLabel>Cells</GroupLabel>
        </GroupFooter>
      </Group>

      <Group $w={130} $last>
        <GroupBody>
          <SmallStack $ml={23}>
            <SmallRow>
              <Pic x={2292} y={131} w={32} h={36}>
                <path d="M2320 139V133.500H2295.500L2309 148L2295.500 163.500H2320V158" fill="none" stroke="#666" strokeWidth="3" />
              </Pic>
              <Caret $ml={21} />
            </SmallRow>
            <SmallRow>
              <Pic x={2292} y={181} w={38} h={38}>
                <rect x="2293.500" y="182.500" width="35" height="35" fill="#fff" stroke={GRAY} strokeWidth="1.2" />
                <rect x="2293" y="182" width="36" height="6" fill={GRAY} />
                <path d="M2311 191V209M2303 202L2311 211L2319 202" fill="none" stroke={BLUE} strokeWidth="3.6" />
              </Pic>
              <Caret $ml={4} />
            </SmallRow>
            <SmallRow>
              <Pic x={2294} y={235} w={34} h={32}>
                <path d="M2296 256L2315 237Q2318 235 2320 237L2325 242Q2326 245 2324 247L2305 265Q2302 266 2300 264Z" fill="#e8839a" />
                <path d="M2299 251L2310 262" stroke="#f3f3f3" strokeWidth="1.4" />
              </Pic>
              <Caret $ml={6} />
            </SmallRow>
          </SmallStack>
          <SortCol $ml={26}>
            <Pic x={2380} y={130} w={24} h={76} mt={10}>
              <path d="M2382 160L2392 132L2402 160" fill="none" stroke={BLUE} strokeWidth="5" />
              <path d="M2382 168H2400M2382 182L2398 170" fill="none" stroke="#8a63b8" strokeWidth="4" />
            </Pic>
            <BigText>Sort &amp;</BigText>
            <BigText>Filter</BigText>
          </SortCol>
        </GroupBody>
        <GroupFooter>
          <GroupLabel $left $pl={113}>Editing</GroupLabel>
        </GroupFooter>
      </Group>
    </Ribbon>

    <FormulaBar>
      <NameBox>
        A8
        <NameCaret />
      </NameBox>
      <Grip>
        <span />
        <span />
        <span />
      </Grip>
      <FxBox>
        <Pic x={256} y={347} w={217} h={39}>
          <path d="M284 361L303 378M303 361L284 378" stroke="#c4c4c4" strokeWidth="3.4" />
          <path d="M354 369L361 376L377 360" fill="none" stroke="#c4c4c4" strokeWidth="4.5" />
          <text x="423" y="377" fontSize="35" fontStyle="italic" fill="#707070" style={{ fontFamily: '"Liberation Serif", serif' }}>fx</text>
        </Pic>
      </FxBox>
      <FormulaInput />
    </FormulaBar>

    <Sheet>
      <SheetRow>
        <Corner />
        {columns.map(c => (
          <ColHead key={c} $active={c === 'A'}>
            {c}
          </ColHead>
        ))}
        <ColHead />
      </SheetRow>
      {Array.from({ length: 15 }, (_, i) => i + 1).map(row => (
        <SheetRow key={row}>
          <RowHead $active={row === 8}>{row}</RowHead>
          {columns.map(c => (
            <Cell key={c} $selected={c === 'A' && row === 8}>
              {values[`${c}${row}`]}
            </Cell>
          ))}
          <Cell />
        </SheetRow>
      ))}
      <MacroButton>Run Macro</MacroButton>
    </Sheet>
  </Page>
)

export default App
